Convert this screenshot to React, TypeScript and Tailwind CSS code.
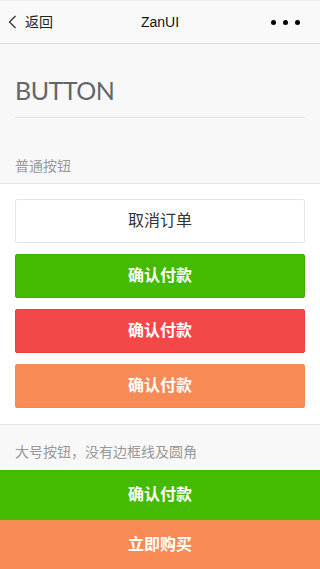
import React from "react";

const font = { fontFamily: '"Liberation Sans", "Noto Sans CJK SC", sans-serif' };

function NavBar() {
  return (
    <div className="relative flex h-[44px] items-center border-b border-[#dcdcdc] bg-[#f9f9f9] border-t border-t-[#eeeeee]">
      <div className="flex items-center pl-[8px]">
        <svg width="9" height="14" viewBox="0 0 9 14" className="mr-[8px]">
          <polyline points="7.5,1 1.5,7 7.5,13" fill="none" stroke="#333" strokeWidth="1.3" />
        </svg>
        <span className="text-[14px] text-[#222]">返回</span>
      </div>
      <div className="absolute inset-x-0 text-center text-[14px] text-[#111] pointer-events-none">ZanUI</div>
      <div className="ml-auto flex items-center gap-[7px] pr-[20px]">
        <span className="h-[5px] w-[5px] rounded-full bg-black" />
        <span className="h-[5px] w-[5px] rounded-full bg-black" />
        <span className="h-[5px] w-[5px] rounded-full bg-black" />
      </div>
    </div>
  );
}

function Btn({ className, children }: { className: string; children: React.ReactNode }) {
  return (
    <button className={"flex h-[44px] w-full items-center justify-center rounded-[2px] border text-[16px] " + className}>
      {children}
    </button>
  );
}

export default function App() {
  return (
    <div className="min-h-[569px] w-[320px] overflow-hidden bg-[#f8f8f8]" style={font}>
      <NavBar />
      <div className="mx-[15px] border-b border-[#e5e5e5] pt-[31px] pb-[12px]">
        <h1
          className="text-[25px] leading-[30px] text-[#666] font-normal tracking-[-0.5px]"
          style={{ fontFamily: 'Lato, "Liberation Sans", sans-serif' }}
        >
          BUTTON
        </h1>
      </div>
      <div className="px-[15px] pt-[38px] pb-[7px] text-[14px] leading-[20px] text-[#999]">普通按钮</div>
      <div className="flex flex-col gap-[11px] border-y border-[#e5e5e5] bg-white px-[15px] pt-[15px] pb-[16px]">
        <Btn className="border-[#e5e5e5] bg-white text-[#333]">取消订单</Btn>
        <Btn className="border-[#40ad00] bg-[#44bb00] font-bold text-white">确认付款</Btn>
        <Btn className="border-[#e94040] bg-[#f44747] font-bold text-white">确认付款</Btn>
        <Btn className="border-[#f08a55] bg-[#f78a55] font-bold text-white">确认付款</Btn>
      </div>
      <div className="px-[15px] pt-[17px] pb-[8px] text-[14px] leading-[20px] text-[#999]">大号按钮，没有边框线及圆角</div>
      <button className="flex h-[50px] w-full items-center justify-center bg-[#44bb00] text-[16px] font-bold text-white">
        确认付款
      </button>
      <button className="flex h-[50px] w-full items-center justify-center bg-[#f78a55] text-[16px] font-bold text-white">
        立即购买
      </button>
    </div>
  );
}
